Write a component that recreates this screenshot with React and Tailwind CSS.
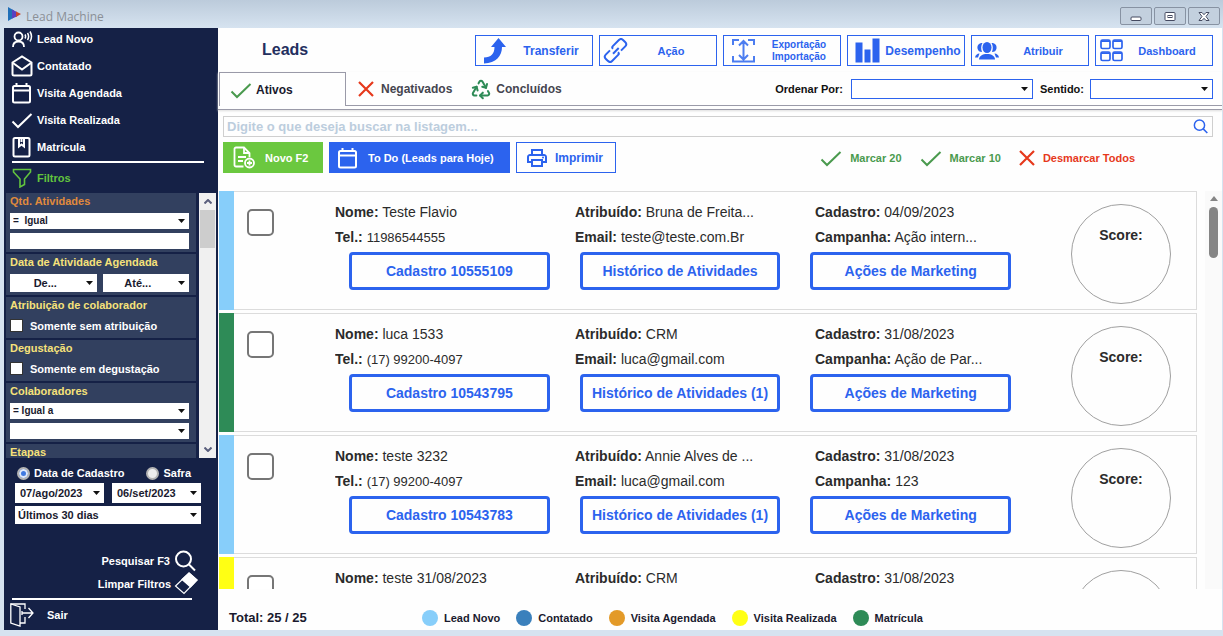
import { useState } from "react";
import { Recycle } from "lucide-react";
import { MdOutlinePrint } from "react-icons/md";

const stages = [
  { label: "Lead Novo", dot: "bg-[#87cefa]", icon: <VoiceIcon /> },
  { label: "Contatado", dot: "bg-[#3a80bc]", icon: <MailOpenIcon /> },
  { label: "Visita Agendada", dot: "bg-[#e39a28]", icon: <CalendarIcon /> },
  { label: "Visita Realizada", dot: "bg-[#ffff14]", icon: <CheckIcon /> },
  { label: "Matrícula", dot: "bg-[#2e8b57]", icon: <BookIcon /> },
];

const leads = [
  {
    id: "10555109",
    bar: "bg-[#87cefa]",
    nome: "Teste Flavio",
    tel: "11986544555",
    atribuido: "Bruna de Freita...",
    email: "teste@teste.com.Br",
    cadastro: "04/09/2023",
    campanha: "Ação intern...",
    historico: "Histórico de Atividades",
  },
  {
    id: "10543795",
    bar: "bg-[#2e8b57]",
    nome: "luca 1533",
    tel: "(17) 99200-4097",
    atribuido: "CRM",
    email: "luca@gmail.com",
    cadastro: "31/08/2023",
    campanha: "Ação de Par...",
    historico: "Histórico de Atividades (1)",
  },
  {
    id: "10543783",
    bar: "bg-[#87cefa]",
    nome: "teste 3232",
    tel: "(17) 99200-4097",
    atribuido: "Annie Alves de ...",
    email: "luca@gmail.com",
    cadastro: "31/08/2023",
    campanha: "123",
    historico: "Histórico de Atividades (1)",
  },
  // details not loaded yet
  {
    bar: "bg-[#ffff14]",
    nome: "teste 31/08/2023",
    atribuido: "CRM",
    cadastro: "31/08/2023",
  },
];

/* Icons */

function VoiceIcon() {
  return (
    <svg className="size-[22px]" viewBox="0 0 22 22" fill="none" stroke="currentColor" strokeWidth={1.8}>
      <circle cx="7.500" cy="8.500" r="4" />
      <path d="M2 19c0-3.500 2-5.500 5.500-5.500S13 15.500 13 19" />
      <path d="M14 6.500q1.200 2 0 4M16.500 5q2.200 3.500 0 7M19 3.500q3 5 0 10" strokeWidth={1.5} />
    </svg>
  );
}

function MailOpenIcon() {
  return (
    <svg className="size-[22px]" viewBox="0 0 22 22" fill="none" stroke="currentColor" strokeWidth={2}>
      <path d="M1.5 7.5 11 1.5l9.5 6v11.5a1.5 1.5 0 0 1-1.5 1.5H3a1.5 1.5 0 0 1-1.5-1.5z" />
      <path d="M2 8l9 6.5L20 8" />
    </svg>
  );
}

function CalendarIcon() {
  return (
    <svg className="size-[22px]" viewBox="0 0 22 22" fill="none" stroke="currentColor" strokeWidth={2}>
      <rect x="2" y="4" width="17" height="16.5" rx="1.5" />
      <path d="M2 8.5h17M5.5 1v3M15.5 1v3" />
    </svg>
  );
}

function CheckIcon() {
  return (
    <svg className="size-[22px]" viewBox="0 0 22 22" fill="none" stroke="currentColor" strokeWidth={2}>
      <path d="M1.5 12.5 7 18 20.5 5" />
    </svg>
  );
}

function BookIcon() {
  return (
    <svg className="size-[22px]" viewBox="0 0 22 22" fill="none" stroke="currentColor" strokeWidth={2}>
      <rect x="2.5" y="2" width="16" height="18.5" rx="1.5" />
      <path d="M8 2v8.5l2.5-2 2.5 2V2M10.5 2v4" />
    </svg>
  );
}

function CrossIcon() {
  return (
    <svg className="size-4" viewBox="0 0 16 16" fill="none" stroke="#e6391c" strokeWidth={2.2}>
      <path d="M1 1l14 14M15 1 1 15" />
    </svg>
  );
}

function FunnelIcon() {
  return (
    <svg className="size-[20px]" viewBox="0 0 20 20" fill="none" stroke="currentColor" strokeWidth={1.6}>
      <path d="M1.500 1.500h17V4L12.500 11v5.500L8 19v-8L1.500 4z" />
    </svg>
  );
}

function SearchIcon({ className, width }) {
  return (
    <svg className={className} viewBox="0 0 22 22" fill="none" stroke="currentColor" strokeWidth={width}>
      <circle cx="9.500" cy="9" r="7.500" />
      <path d="M15 14.500l6 6" />
    </svg>
  );
}

function EraserIcon() {
  return (
    <svg className="h-[23px] w-6" viewBox="0 0 24 23" fill="none" stroke="#fff" strokeWidth={1.2}>
      <path d="M15 1 23 8 10 21.500 1.500 14z" />
      <path d="M15 1 23 8l-6.500 7L8 7.500z" fill="#fff" />
    </svg>
  );
}

function ExitIcon() {
  return (
    <svg className="size-6" viewBox="0 0 24 24" fill="none" stroke="#fff" strokeWidth={1.3}>
      <path d="M.8 1 10 4v19L.8 20z" />
      <path d="M.8 1H15v5M15 14v6h-5M12 10h11M18.500 5l4.500 5-4.500 5M12 8v4" />
    </svg>
  );
}

function TransferIcon() {
  return (
    <svg className="size-[26px]" viewBox="0 0 26 26" fill="currentColor">
      <path d="M16.500 0 24 9h-4c0 9-6 16-18 16.500v-6c7 0 10.500-4 10.500-10.500H9z" />
    </svg>
  );
}

function ChainIcon() {
  return (
    <svg className="size-[25px]" viewBox="0 0 25 25" fill="none" stroke="currentColor" strokeWidth={2}>
      <g transform="rotate(-45 12.500 12.500)">
        <path d="M12 9.500V9.200q0-1.700 1.700-1.700h8.600q3 0 3 3.200v2.600q0 3.200-3 3.200h-6" />
        <path d="M13 15.500v.3q0 1.700-1.700 1.700H2.700q-3 0-3-3.200v-2.600q0-3.200 3-3.200h6" />
        <path d="M8.500 13h8" />
      </g>
    </svg>
  );
}

function ImportExportIcon() {
  return (
    <svg className="size-[25px]" viewBox="0 0 25 25" fill="none" stroke="#4c7df0" strokeWidth={2}>
      <path d="M2 7V2h6M17 2h6v5M2 18v5.500h21V18M12.500 3v18M8 7.500 12.500 3 17 7.500M8 17l4.500 4.500L17 17" />
    </svg>
  );
}

function BarsIcon() {
  return (
    <svg className="size-[25px]" viewBox="0 0 25 25" fill="currentColor">
      <path d="M.500 4.500h7v20h-7zM9.500 11.500h6v13h-6zM17.500.500h7v24h-7z" />
    </svg>
  );
}

function PeopleIcon() {
  return (
    <svg className="size-6" viewBox="0 0 24 24" fill="currentColor">
      <ellipse cx="12" cy="8.500" rx="4.500" ry="5.500" />
      <path d="M7.500 4C3.500 4 2 6.500 2.500 9.500c.5 2.500 2 3.500 4.500 3.500C5.700 9.500 6 6.500 7.500 4zM16.500 4c4 0 5.500 2.500 5 5.500-.5 2.500-2 3.500-4.500 3.500 1.300-3.500 1-6.500-.5-9z" />
      <path d="M4 20.500c0-3.500 3.500-5.500 8-5.500s8 2 8 5.500z" />
      <path d="M0 18.500c.5-2.500 2-3.800 4.500-4L3 18.500zM24 18.500c-.5-2.500-2-3.800-4.500-4L21 18.500z" />
    </svg>
  );
}

function GridIcon() {
  return (
    <svg className="size-[23px]" viewBox="0 0 23 23" fill="none" stroke="currentColor" strokeWidth={1.7}>
      <rect x="1" y="1" width="9" height="8.500" rx="1.500" />
      <rect x="13" y="1" width="9" height="8.500" rx="1.500" />
      <rect x="1" y="13" width="9" height="8.500" rx="1.500" />
      <rect x="13" y="13" width="9" height="8.500" rx="1.500" />
      <path d="M1 2.200h9M13 2.200h9M1 14.200h9M13 14.200h9" />
    </svg>
  );
}

function NewDocIcon() {
  return (
    <svg className="size-[23px]" viewBox="0 0 23 23" fill="none" stroke="currentColor" strokeWidth={1.8}>
      <path d="M10.500 20.500H3A1.500 1.500 0 0 1 1.500 19V3A1.500 1.500 0 0 1 3 1.500h8l5.500 5.500v4" />
      <path d="M11 1.500V7h5.500M5 11h8M5 15h5" />
      <circle cx="16.500" cy="17" r="4.500" />
      <path d="M16.500 14.500v5M14 17h5" />
    </svg>
  );
}

function LogoIcon() {
  return (
    <svg className="size-[14px]" viewBox="0 0 14 14">
      <path d="M1 0l6 3.500v7L1 14z" fill="#1f6fb8" />
      <path d="M5 2.500 10 5v4.500l-5 2z" fill="#5a3fc0" />
      <path d="M9 4.500 14 7l-5 3z" fill="#c8432f" />
    </svg>
  );
}

function WindowButton({ label, children }) {
  return (
    <button
      aria-label={label}
      className="flex h-[18px] w-8 items-center justify-center rounded-xs border border-[#8792a2] bg-[#c3d0de]"
    >
      <svg className="h-[11px] w-3" viewBox="0 0 12 11" fill="#fff" stroke="#454a60">
        {children}
      </svg>
    </button>
  );
}

/* Form controls */

function Select({ label, value = "", className, textClass = "px-1" }) {
  return (
    <div className={`relative bg-white text-[#1a1a2e] ${className}`}>
      <select
        aria-label={label}
        defaultValue={value}
        className={`block size-full appearance-none font-bold outline-none ${textClass}`}
      >
        <option value={value}>{value}</option>
      </select>
      <svg className="pointer-events-none absolute top-1/2 right-1 h-1 w-[7px] -translate-y-1/2" viewBox="0 0 7 4">
        <path d="M0 0h7L3.500 4z" fill="#111" />
      </svg>
    </div>
  );
}

function FilterGroup({ title, titleClass = "text-[#f6e27a]", children }) {
  return (
    <section className="bg-[#32405f] pr-[7px] pb-[3px] pl-1">
      <h3 className={`h-5 leading-4 font-bold ${titleClass}`}>{title}</h3>
      {children}
    </section>
  );
}

function FilterCheck({ children }) {
  return (
    <label className="mb-px flex h-[17px] items-center gap-[7px] font-bold text-white">
      <input type="checkbox" className="size-[13px] appearance-none border border-[#333] bg-white checked:bg-[#2c63ee]" />
      {children}
    </label>
  );
}

function PeriodRadio({ label, checked, onChange }) {
  return (
    <label className="flex items-center gap-1">
      <input
        type="radio"
        name="periodo"
        checked={checked}
        onChange={onChange}
        className="size-[13px] appearance-none rounded-full border-2 border-[#b4b4b4] bg-[#eeeeee] checked:bg-[#3f78e0] checked:shadow-[inset_0_0_0_2px_#dfe8fa]"
      />
      {label}
    </label>
  );
}

function Sidebar() {
  const [period, setPeriod] = useState("cadastro");

  return (
    <aside className="flex w-[214px] shrink-0 flex-col bg-[#152146] text-white">
      <nav className="flex flex-col gap-[5px] pl-[7px]">
        {stages.map((stage) => (
          <button key={stage.label} className="flex h-[22px] items-center gap-1 font-bold">
            {stage.icon}
            {stage.label}
          </button>
        ))}
      </nav>
      <div className="mt-[3px] mr-[14px] ml-2 h-0.5 bg-white" />
      <h2 className="mt-1 mb-1 flex h-[22px] items-center gap-[5px] pl-2 font-bold text-[#62c43e]">
        <FunnelIcon />
        Filtros
      </h2>

      <div className="flex h-[265px] justify-between overflow-hidden pr-0.5 pl-0.5">
        <div className="flex w-[190px] flex-col gap-0.5">
          <FilterGroup title="Qtd. Atividades" titleClass="text-[#e08a3c]">
            <Select label="Operador" value={"=\u00a0\u00a0Igual"} className="h-4 text-[10px]" textClass="px-[3px]" />
            <input aria-label="Quantidade" className="mt-1 block h-4 w-full bg-white px-1 text-black outline-none" />
          </FilterGroup>
          <FilterGroup title="Data de Atividade Agendada">
            <div className="flex gap-1.5">
              <Select label="De" value="De..." className="h-[18px] flex-1" textClass="pr-4 text-center" />
              <Select label="Até" value="Até..." className="h-[18px] flex-1" textClass="pr-4 text-center" />
            </div>
          </FilterGroup>
          <FilterGroup title="Atribuição de colaborador">
            <FilterCheck>Somente sem atribuição</FilterCheck>
          </FilterGroup>
          <FilterGroup title="Degustação">
            <FilterCheck>Somente em degustação</FilterCheck>
          </FilterGroup>
          <FilterGroup title="Colaboradores">
            <Select label="Operador de colaborador" value="= Igual a" className="h-4 text-[10px]" textClass="px-[3px]" />
            <Select label="Colaborador" className="mt-1 h-4" />
          </FilterGroup>
          <FilterGroup title="Etapas" />
        </div>
        <div className="flex w-[17px] flex-col items-center bg-[#f0f0f0]">
          <svg className="my-[6px] h-[5px] w-2 shrink-0" viewBox="0 0 8 5" fill="none" stroke="#5a5f7d" strokeWidth={2}>
            <path d="M.5 4.500 4 1l3.500 3.500" />
          </svg>
          <div className="h-[38px] w-[15px] bg-[#cdcdcd]" />
          <svg className="mt-auto mb-[6px] h-[5px] w-2 shrink-0" viewBox="0 0 8 5" fill="none" stroke="#5a5f7d" strokeWidth={2}>
            <path d="M.5.500 4 4 7.500.500" />
          </svg>
        </div>
      </div>

      <div className="flex flex-col pr-[17px] pl-[11px] font-bold">
        <div className="mt-[5px] flex h-5 items-center gap-[22px] pl-0.5">
          <PeriodRadio
            label="Data de Cadastro"
            checked={period === "cadastro"}
            onChange={() => setPeriod("cadastro")}
          />
          <PeriodRadio label="Safra" checked={period === "safra"} onChange={() => setPeriod("safra")} />
        </div>
        <div className="flex gap-2">
          <Select label="Data inicial" value="07/ago/2023" className="h-5 flex-1" textClass="px-[5px]" />
          <Select label="Data final" value="06/set/2023" className="h-5 flex-1" textClass="px-[5px]" />
        </div>
        <Select label="Período" value="Últimos 30 dias" className="mt-[3px] h-[18px]" textClass="px-[3px]" />
      </div>

      <div className="mt-auto flex flex-col items-end pr-5">
        <button className="flex h-[23px] items-center gap-1 pr-0.5 font-bold">
          Pesquisar F3
          <SearchIcon className="size-[22px]" width={2} />
        </button>
        <button className="flex h-[23px] items-center gap-[3px] font-bold">
          Limpar Filtros
          <EraserIcon />
        </button>
      </div>
      <div className="mt-[3px] mr-[26px] ml-2 h-0.5 bg-white" />
      <button className="my-[3px] flex h-6 items-center gap-[13px] pl-1.5 font-bold">
        <ExitIcon />
        Sair
      </button>
    </aside>
  );
}

function ToolbarButton({ icon, children, padding = "pl-0.5", textClass = "pr-0.5 text-[11px]" }) {
  return (
    <button className={`flex h-[31px] w-[118px] items-center border border-[#2c63ee] font-bold text-[#2c63ee] ${padding}`}>
      <span className="flex w-[26px] shrink-0 justify-center">{icon}</span>
      <span className={`flex-1 text-center ${textClass}`}>{children}</span>
    </button>
  );
}

function Tabs() {
  return (
    <div className="mt-1.5 border-b border-[#9a9aa8] pb-[3px] shadow-[0_1px_2px_#ddd]">
      <div className="flex h-[34px] items-stretch pl-px">
        <button className="flex w-[127px] items-center gap-1 border border-b-0 border-[#9a9aa8] pl-2.5 text-[12px] font-bold text-[#1a1a2e]">
          <span className="text-[#4a9a4e]">
            <CheckIcon />
          </span>
          Ativos
        </button>
        <div className="flex flex-1 items-center border-b border-[#9a9aa8] pr-[9px] text-[#45454f]">
          <button className="ml-3 flex items-center gap-[7px] text-[12px] font-bold">
            <CrossIcon />
            Negativados
          </button>
          <button className="ml-[18px] flex items-center gap-1 text-[12px] font-bold">
            <Recycle className="size-[22px] text-[#2e8b57]" strokeWidth={2.2} />
            Concluídos
          </button>
          <span className="mr-2 ml-auto font-bold text-[#111]">Ordenar Por:</span>
          <Select label="Ordenar Por" className="h-5 w-[182px] border border-[#2c63ee]" />
          <span className="mr-1.5 ml-[7px] font-bold text-[#111]">Sentido:</span>
          <Select label="Sentido" className="h-5 w-[123px] border border-[#2c63ee]" />
        </div>
      </div>
    </div>
  );
}

function MarkButton({ icon, color, children }) {
  return (
    <button className={`flex items-center gap-2 font-bold ${color}`}>
      {icon}
      {children}
    </button>
  );
}

function Field({ label, value, valueClass }) {
  return (
    <p className="truncate">
      <b>{label}:</b> <span className={valueClass}>{value}</span>
    </p>
  );
}

function LeadButton({ children }) {
  return (
    <button className="h-[38px] flex-1 rounded-sm border-3 border-[#2c63ee] text-[14px] font-bold whitespace-nowrap text-[#2c63ee]">
      {children}
    </button>
  );
}

function LeadCard({ lead }) {
  return (
    <article className="flex h-[119px] shrink-0">
      <div className={`w-[15px] ${lead.bar}`} />
      <div className="flex flex-1 border border-l-0 border-[#dcdcdc]">
        <input
          type="checkbox"
          aria-label={`Selecionar ${lead.nome}`}
          className="mt-[17px] mr-[61px] ml-[13px] size-[27px] shrink-0 appearance-none rounded-[5px] border-2 border-[#767676] bg-white checked:bg-[#2c63ee]"
        />
        <div className="flex-1 pt-2 text-[14px] leading-[25px] text-[#2b2b2b]">
          <div className="grid grid-cols-3">
            <Field label="Nome" value={lead.nome} />
            <Field label="Atribuído" value={lead.atribuido} />
            <Field label="Cadastro" value={lead.cadastro} />
            {lead.id && (
              <>
                <Field label="Tel." value={lead.tel} valueClass="text-[13px]" />
                <Field label="Email" value={lead.email} />
                <Field label="Campanha" value={lead.campanha} />
              </>
            )}
          </div>
          {lead.id && (
            <div className="mt-0.5 mr-11 ml-3.5 flex gap-[30px]">
              <LeadButton>Cadastro {lead.id}</LeadButton>
              <LeadButton>{lead.historico}</LeadButton>
              <LeadButton>Ações de Marketing</LeadButton>
            </div>
          )}
        </div>
        <div className="mt-3 mr-[25px] ml-4 size-[100px] shrink-0 rounded-full border border-[#a0a0a0] pt-[23px] text-center text-[14px] font-bold text-[#2b2b2b]">
          {lead.id && "Score:"}
        </div>
      </div>
    </article>
  );
}

function LeadList() {
  return (
    <div className="mt-[18px] flex min-h-0 flex-1 overflow-hidden pl-px">
      <div className="flex flex-1 flex-col gap-[3px]">
        {leads.map((lead) => (
          <LeadCard key={lead.nome} lead={lead} />
        ))}
      </div>
      <div className="ml-2 flex w-[17px] flex-col items-center bg-[#fafafa] pt-[5px]">
        <svg className="mb-[6px] h-[5px] w-2 shrink-0" viewBox="0 0 8 5">
          <path d="M4 0l4 5H0z" fill="#858585" />
        </svg>
        <div className="h-[51px] w-[9px] rounded-full bg-[#858585]" />
      </div>
    </div>
  );
}

function App() {
  return (
    <div className="flex h-screen flex-col bg-[#d6e3f0] font-['Liberation_Sans',Arial,sans-serif] text-[11px] leading-[14px]">
      <header className="flex h-7 shrink-0 items-center bg-linear-to-b from-[#bccbdb] to-[#d6e3f0] pr-[3px] pl-[7px]">
        <LogoIcon />
        <h1 className="mt-1.5 ml-[5px] flex-1 font-['Open_Sans','Noto_Sans',sans-serif] text-[12px] text-[#8b9096]">
          Lead Machine
        </h1>
        <div className="mt-1 flex gap-0.5">
          <WindowButton label="Minimizar">
            <rect x="1" y="6" width="10" height="3.500" rx="1" />
          </WindowButton>
          <WindowButton label="Restaurar">
            <rect x="1" y="1.500" width="10" height="8" rx="1" />
            <rect x="4" y="4.500" width="4" height="2" />
          </WindowButton>
          <WindowButton label="Fechar">
            <path d="M1 1.500h3l2 2.200 2-2.200h3L8 5.500l3 4H8L6 7.300 4 9.500H1l3-4z" />
          </WindowButton>
        </div>
      </header>

      <div className="flex min-h-0 flex-1 pr-px pb-1.5 pl-1">
        <Sidebar />

        <main className="flex min-w-0 flex-1 flex-col bg-[#fefefe]">
          <div className="mt-[7px] flex items-center justify-between pr-[9px] pl-11">
            <h2 className="pb-0.5 text-[16px] font-bold text-[#242f5e]">Leads</h2>
            <div className="flex gap-1.5">
              <ToolbarButton icon={<TransferIcon />} padding="pl-1.5" textClass="pl-0.5 text-[12px]">
                Transferir
              </ToolbarButton>
              <ToolbarButton icon={<ChainIcon />}>Ação</ToolbarButton>
              <ToolbarButton icon={<ImportExportIcon />} padding="pl-1.5" textClass="pl-0.5 text-[10px] leading-3">
                Exportação
                <br />
                Importação
              </ToolbarButton>
              <ToolbarButton icon={<BarsIcon />} padding="pl-1.5" textClass="pl-0.5 text-[12px]">
                Desempenho
              </ToolbarButton>
              <ToolbarButton icon={<PeopleIcon />}>Atribuir</ToolbarButton>
              <ToolbarButton icon={<GridIcon />}>Dashboard</ToolbarButton>
            </div>
          </div>

          <Tabs />

          <div className="mt-1.5 mr-[9px] ml-[5px] flex h-[21px] items-center border border-[#cfcfcf] pr-1 text-[#2c63ee]">
            <input
              aria-label="Buscar"
              placeholder="Digite o que deseja buscar na listagem..."
              className="h-full flex-1 px-[3px] text-[13px] font-bold text-[#1a1a2e] outline-none placeholder:text-[#bccddd]"
            />
            <button aria-label="Pesquisar">
              <SearchIcon className="size-[15px]" width={2.2} />
            </button>
          </div>

          <div className="mt-[5px] flex items-center gap-1.5 pr-[87px] pl-[5px]">
            <button className="flex h-[31px] w-[100px] items-center gap-[9px] bg-[#6bc83f] pl-2.5 font-bold text-white">
              <NewDocIcon />
              Novo F2
            </button>
            <button className="flex h-[31px] w-[181px] items-center gap-[9px] bg-[#2c63ee] pl-2 font-bold whitespace-nowrap text-white">
              <CalendarIcon />
              To Do (Leads para Hoje)
            </button>
            <button className="flex h-[31px] w-[100px] items-center gap-1.5 border border-[#2c63ee] pl-2 text-[12px] font-bold text-[#2c63ee]">
              <MdOutlinePrint className="size-6" />
              Imprimir
            </button>
            <div className="ml-auto flex items-center gap-[18px]">
              <MarkButton icon={<CheckIcon />} color="text-[#4a9a4e]">
                Marcar 20
              </MarkButton>
              <MarkButton icon={<CheckIcon />} color="text-[#4a9a4e]">
                Marcar 10
              </MarkButton>
              <MarkButton icon={<CrossIcon />} color="text-[#e6391c]">
                Desmarcar Todos
              </MarkButton>
            </div>
          </div>

          <LeadList />

          <footer className="flex h-[41px] shrink-0 items-center pt-4 pl-[11px] font-bold text-[#1a1a2e]">
            <span className="w-[193px] text-[13px]">Total: 25 / 25</span>
            <ul className="flex gap-4">
              {stages.map((stage) => (
                <li key={stage.label} className="flex items-center gap-1.5">
                  <span className={`size-4 rounded-full ${stage.dot}`} />
                  {stage.label}
                </li>
              ))}
            </ul>
          </footer>
        </main>
      </div>
    </div>
  );
}

export default App;
